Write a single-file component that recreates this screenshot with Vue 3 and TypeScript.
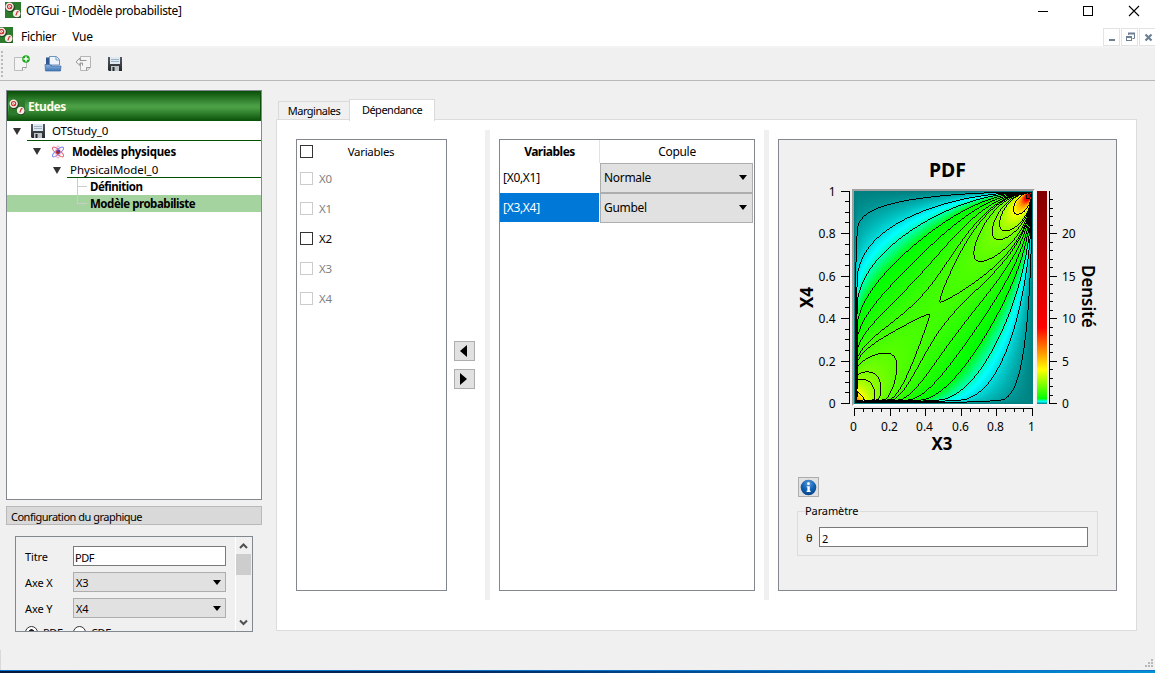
<script setup lang="ts">
import { onMounted, ref } from 'vue'

interface Tick { pos: number; label?: string }
interface VariableRow { name: string; enabled: boolean }
interface CopulaRow { pair: string; copula: string; selected: boolean }

const variables: VariableRow[] = [
  { name: 'X0', enabled: false },
  { name: 'X1', enabled: false },
  { name: 'X2', enabled: true },
  { name: 'X3', enabled: false },
  { name: 'X4', enabled: false },
]
const copulas: CopulaRow[] = [
  { pair: '[X0,X1]', copula: 'Normale', selected: false },
  { pair: '[X3,X4]', copula: 'Gumbel', selected: true },
]

const unitTicks = (origin: number, span: number): Tick[] =>
  Array.from({ length: 21 }, (_, i) => ({
    pos: Math.round(origin + (span * i) / 20) + 0.5,
    label: i % 4 === 0 ? String(i / 20) : undefined,
  }))
const xTicks = unitTicks(76, 178)
const yTicks = unitTicks(264, -212.5)
const zTicks: Tick[] = Array.from({ length: 25 }, (_, i) => ({
  pos: Math.round(264 - i * 8.5) + 0.5,
  label: i % 5 === 0 ? String(i) : undefined,
}))

const W = 179
const H = 213
const CELLS = 64
const levels = [0.063, 0.22, 0.38, 0.6, 0.83, 1.1, 1.37, 1.508, 1.77, 2.23, 2.58, 3.99, 10.9]
const stops: [number, number, number, number][] = [
  [0, 0, 128, 128],
  [0.3, 0, 255, 255],
  [0.62, 0, 255, 0],
  [4, 255, 255, 0],
  [9, 255, 0, 0],
  [25, 128, 0, 0],
]

/* Gumbel copula density, theta = 2 */
function density(u: number, v: number): number {
  if (u <= 0 || v <= 0 || u >= 1 || v >= 1) return 0
  const x = -Math.log(u)
  const y = -Math.log(v)
  const r = Math.sqrt(x * x + y * y)
  return (Math.exp(-r) / (u * v)) * x * y * Math.pow(r, -3) * (r + 1)
}

/* Density sampled on a regular grid and interpolated bilinearly */
const grid = Array.from({ length: CELLS + 1 }, (_, a) =>
  Array.from({ length: CELLS + 1 }, (_, b) => density(a / CELLS, b / CELLS)))

function sample(i: number, j: number): number {
  const clamp = (t: number) => Math.min(1, Math.max(0, t)) * CELLS
  const x = clamp(i / (W - 1))
  const y = clamp(1 - j / (H - 1))
  const a = Math.min(CELLS - 1, Math.floor(x))
  const b = Math.min(CELLS - 1, Math.floor(y))
  const s = x - a
  const t = y - b
  return (1 - s) * ((1 - t) * grid[a][b] + t * grid[a][b + 1]) + s * ((1 - t) * grid[a + 1][b] + t * grid[a + 1][b + 1])
}

function colour(z: number): number[] {
  for (let i = 1; i < stops.length; i++) {
    const a = stops[i - 1]
    const b = stops[i]
    if (z <= b[0]) {
      const t = (z - a[0]) / (b[0] - a[0])
      return [1, 2, 3].map(k => Math.round(a[k] + t * (b[k] - a[k])))
    }
  }
  return [128, 0, 0]
}

const plot = ref<HTMLCanvasElement | null>(null)
onMounted(() => {
  const ctx = plot.value?.getContext('2d')
  if (!ctx) return
  const img = ctx.createImageData(W, H)
  for (let j = 0; j < H; j++) {
    for (let i = 0; i < W; i++) {
      const c = sample(i, j)
      const near = [sample(i + 1, j), sample(i - 1, j), sample(i, j + 1), sample(i, j - 1)]
      const onLine = levels.some(l => c >= l && near.some(n => n < l))
      const rgb = onLine ? [0, 0, 0] : colour(c)
      img.data.set([rgb[0], rgb[1], rgb[2], 255], (j * W + i) * 4)
    }
  }
  ctx.putImageData(img, 0, 0)
})
</script>

<template>
  <div class="window">
    <svg class="defs" width="0" height="0">
      <defs>
        <linearGradient id="disk" x1="0" y1="0" x2="0" y2="1"><stop offset="0" stop-color="#555b62" /><stop offset="1" stop-color="#25282c" /></linearGradient>
        <linearGradient id="tray" x1="0" y1="0" x2="0" y2="1"><stop offset="0" stop-color="#8fb6e0" /><stop offset="1" stop-color="#3f74b5" /></linearGradient>
        <radialGradient id="ball" cx=".5" cy=".25" r=".8"><stop offset="0" stop-color="#5d9ad8" /><stop offset=".5" stop-color="#1262b3" /><stop offset="1" stop-color="#063f85" /></radialGradient>
        <symbol id="logo" viewBox="0 0 16 16">
          <rect width="16" height="16" fill="#2c7a2c" />
          <circle cx="5.200" cy="5.400" r="4.700" fill="#24401c" /><circle cx="4.600" cy="4.700" r="4.200" fill="#f3e9e2" />
          <circle cx="4.600" cy="4.600" r="2.100" fill="none" stroke="#c8302c" stroke-width="1.100" /><path d="M4.500 4.500 6.300 6.800" stroke="#c8302c" />
          <circle cx="12" cy="12" r="4.200" fill="#24401c" /><circle cx="11.700" cy="11.500" r="3.800" fill="#f3efe6" />
          <path d="M10.800 13.500 12.400 9.500M12.100 9.700h1.500" stroke="#c8302c" stroke-width="1.100" />
        </symbol>
        <symbol id="floppy" viewBox="0 0 14 14">
          <path d="M0 0h14v14H1L0 13z" fill="url(#disk)" /><rect x="2" y="0" width="10" height="7" fill="#dfe9f1" />
          <path d="M3 2.500h8M3 4.500h8" stroke="#9fb3c4" /><rect x="3" y="9" width="8" height="5" fill="#bfc4c8" /><rect x="4.500" y="10" width="2" height="4" fill="#25282c" />
        </symbol>
      </defs>
    </svg>

    <header class="titlebar">
      <svg class="logo title-logo"><use href="#logo" /></svg>
      <span class="title-text">OTGui - [Modèle probabiliste]</span>
      <svg class="win-buttons" width="110" height="20" viewBox="0 0 110 20" fill="none" stroke="#000" shape-rendering="crispEdges">
        <path d="M0 10.500h10" /><rect x="45.500" y="5.500" width="9" height="9" />
        <path d="M91 5l10 10M101 5l-10 10" shape-rendering="auto" stroke-width="1.100" />
      </svg>
    </header>

    <nav class="menubar">
      <svg class="logo menu-logo"><use href="#logo" /></svg>
      <span class="menu-file">Fichier</span><span>Vue</span>
      <div class="mdi">
        <button><svg width="15" height="16"><path d="M5 11h6" stroke="#6d7f92" stroke-width="2" /></svg></button>
        <button><svg width="15" height="16" fill="none" stroke="#6d7f92"><path d="M6.500 6V4.500h6v5h-2" /><path d="M6 4.500h7" stroke-width="2" /><rect x="4.500" y="8.500" width="5" height="3" /><path d="M4 8h6" stroke-width="2" /></svg></button>
        <button><svg width="15" height="16"><path d="M5.500 5.500l6 6M11.500 5.500l-6 6" stroke="#6d7f92" stroke-width="2.200" /></svg></button>
      </div>
    </nav>

    <div class="toolbar">
      <span class="grip"></span>
      <svg class="tool" width="18" height="18" viewBox="0 0 18 18"><path d="M1.500 2.500h12v10l-4 3h-8z" fill="#f4f4f4" stroke="#bcbcbc" /><path d="M9.500 15.500v-3h4" fill="#fff" stroke="#999" /><circle cx="13" cy="4" r="3.800" fill="#18a818" /><path d="M13 1.500v5M10.500 4h5" stroke="#fff" stroke-width="1.500" /></svg>
      <svg class="tool" width="18" height="18" viewBox="0 0 18 18"><path d="M2 15V2.500h2.500l1-1H8V12z" fill="#30588e" /><path d="M5.500 10V1.500h7l3 3V10z" fill="#eef4fb" stroke="#6f95c4" /><path d="M12 2v3h3" fill="none" stroke="#7799bd" /><path d="M1 9.500h5l1 1.500h10l-.5 5h-15z" fill="url(#tray)" stroke="#3c6ba8" stroke-width=".7" /></svg>
      <svg class="tool" width="18" height="18" viewBox="0 0 18 18"><path d="M5.500 1.500h10v11l-3 3h-7z" fill="#f4f4f4" stroke="#b5b5b5" /><path d="M11.500 15.500v-3h4" fill="#ddd" stroke="#999" /><path d="M11.500 5.500H5V3L1 6.800 5 10.500V8h2.500v2.500" fill="#f5f5f5" stroke="#888" stroke-width=".9" /></svg>
      <svg class="save" width="14" height="14"><use href="#floppy" /></svg>
    </div>

    <main class="body">
      <aside class="side">
        <section class="tree">
          <div class="tree-head"><svg class="logo"><use href="#logo" /></svg><b>Etudes</b></div>
          <div class="node study">
            <i class="arrow"></i>
            <div class="underlined"><svg width="14" height="14"><use href="#floppy" /></svg><span class="study-name">OTStudy_0</span></div>
          </div>
          <div class="node models">
            <i class="arrow"></i>
            <svg width="14" height="14" viewBox="0 0 14 14" fill="none"><ellipse cx="7" cy="7" rx="6.900" ry="2.200" stroke="#e8606e" transform="rotate(40 7 7)" /><ellipse cx="7" cy="7" rx="6.900" ry="2.200" stroke="#7c83f0" transform="rotate(-40 7 7)" /><ellipse cx="7" cy="7" rx="6.200" ry="2" stroke="#e58aa8" stroke-width=".7" transform="rotate(90 7 7)" /><circle cx="7" cy="7" r="2" fill="#a0262e" /><circle cx="8" cy="6" r="1" fill="#3a3acb" /></svg>
            <b class="models-name">Modèles physiques</b>
          </div>
          <div class="node model"><i class="arrow"></i><div class="underlined"><span>PhysicalModel_0</span></div></div>
          <div class="node leaf"><i class="branch"></i><b>Définition</b></div>
          <div class="node leaf last"><i class="branch"></i><b>Modèle probabiliste</b></div>
        </section>
        <div class="dock-title">Configuration du graphique</div>
        <section class="config">
          <div class="form">
            <label>Titre</label><div class="input">PDF</div>
            <label>Axe X</label><div class="combo">X3<i class="drop"></i></div>
            <label>Axe Y</label><div class="combo">X4<i class="drop"></i></div>
            <span class="radio"><i class="dot on"></i>PDF</span><span class="radio"><i class="dot"></i>CDF</span>
          </div>
          <div class="scrollbar">
            <svg width="16" height="17"><path d="M4 11l3.500-3.500L11 11" fill="none" stroke="#505050" stroke-width="2" /></svg>
            <div class="thumb"></div>
            <svg width="16" height="17"><path d="M4 6.500L7.500 10 11 6.500" fill="none" stroke="#505050" stroke-width="2" /></svg>
          </div>
        </section>
      </aside>

      <section class="tabs">
        <div class="tabbar"><div class="tab">Marginales</div><div class="tab active">Dépendance</div></div>
        <div class="pane">
          <div class="varlist">
            <div class="var-head"><i class="check"></i><span>Variables</span></div>
            <div v-for="v in variables" :key="v.name" class="var-row" :class="{ off: !v.enabled }"><i class="check"></i>{{ v.name }}</div>
          </div>
          <div class="movers">
            <button><svg width="19" height="18"><path d="M12 3v12L5 9z" /></svg></button>
            <button><svg width="19" height="18"><path d="M5 3v12l7-6z" /></svg></button>
          </div>
          <div class="splitter"></div>
          <div class="table">
            <div class="table-head"><b>Variables</b><span>Copule</span></div>
            <div v-for="c in copulas" :key="c.pair" class="table-row" :class="{ selected: c.selected }">
              <span class="pair">{{ c.pair }}</span><div class="combo">{{ c.copula }}<i class="drop"></i></div>
            </div>
          </div>
          <div class="splitter second"></div>
          <div class="detail">
            <div class="figure">
              <svg class="axes" width="337" height="330" viewBox="0 0 337 330">
                <text class="heading" x="150" y="37" textLength="37" lengthAdjust="spacingAndGlyphs">PDF</text>
                <g class="lines">
                  <path d="M70.500 51v213M75 268.500h179M270.500 51v213" />
                  <path v-for="t in yTicks" :key="'y' + t.pos" :d="`M${t.label ? 62 : 66} ${t.pos - 1}H71`" />
                  <path v-for="t in xTicks" :key="'x' + t.pos" :d="`M${t.pos - 1} 268V${t.label ? 276 : 272}`" />
                  <path v-for="t in zTicks" :key="'z' + t.pos" :d="`M270 ${t.pos - 1}H${t.label ? 278 : 274}`" />
                </g>
                <template v-for="t in yTicks" :key="'yl' + t.pos"><text v-if="t.label" x="56.500" :y="t.pos + 3.500" text-anchor="end">{{ t.label }}</text></template>
                <template v-for="t in xTicks" :key="'xl' + t.pos"><text v-if="t.label" :x="t.pos - 2" y="291" text-anchor="middle">{{ t.label }}</text></template>
                <template v-for="t in zTicks" :key="'zl' + t.pos"><text v-if="t.label" x="283" :y="t.pos + 3.500">{{ t.label }}</text></template>
                <text class="axis" x="152.500" y="310" textLength="21" lengthAdjust="spacingAndGlyphs">X3</text>
                <text class="axis" transform="translate(34 168) rotate(-90)" textLength="21" lengthAdjust="spacingAndGlyphs">X4</text>
                <text class="axis density" transform="translate(303 125) rotate(90)" textLength="63" lengthAdjust="spacingAndGlyphs">Densité</text>
              </svg>
              <canvas ref="plot" class="canvas" width="179" height="213"></canvas>
              <div class="scale"></div>
            </div>
            <button class="info"><svg width="17" height="17" viewBox="0 0 17 17"><circle cx="8.500" cy="8.500" r="7.800" fill="url(#ball)" /><circle cx="8.500" cy="4.700" r="1.400" fill="#fff" /><path d="M6.800 7.200h3v4.600h.8v1.200H6.600v-1.200h.8V8.300h-.6z" fill="#fff" /></svg></button>
            <fieldset><legend>Paramètre</legend><label>θ</label><div class="input">2</div></fieldset>
          </div>
        </div>
      </section>
    </main>
    <footer class="status">
      <svg width="10" height="10" fill="#b8b8b8"><path d="M6 0h2v2H6zM3 3h2v2H3zM6 3h2v2H6zM0 6h2v2H0zM3 6h2v2H3zM6 6h2v2H6z" /></svg>
    </footer>
    <div class="desktop"></div>
  </div>
</template>

<style>
html, body { margin: 0; overflow: hidden; }
</style>

<style scoped>
* { box-sizing: border-box; }
.window { width: 1155px; height: 673px; display: flex; flex-direction: column; background: #f0f0f0; color: #000; font: 11px/14px "Noto Sans", "Open Sans", sans-serif; overflow: hidden; white-space: nowrap; }
.defs { position: absolute; }
svg { display: block; flex: none; }
button { padding: 0; margin: 0; }
.logo { width: 16px; height: 16px; }
.titlebar { height: 22px; flex: none; display: flex; align-items: center; background: #fff; padding-left: 5px; font-size: 12px; }
.title-logo { margin-top: -3px; }
.title-text { margin-left: 5px; margin-top: -1px; letter-spacing: -.32px; }
.win-buttons { margin-left: auto; margin-right: 7px; }
.menubar { height: 26px; flex: none; display: flex; align-items: center; background: #fff; border-bottom: 2px solid #f3f3f3; font-size: 12px; letter-spacing: -.3px; }
.menu-logo { margin-left: -3px; margin-top: 2px; }
.menu-file { margin: 0 16px 0 8px; }
.menubar > span { padding-top: 5px; }
.mdi { display: flex; gap: 1px; margin-left: auto; margin-right: -1px; padding-top: 5px; }
.mdi button { width: 17px; height: 18px; border: 1px solid #e3e3e3; background: #fff; }
.toolbar { height: 33px; flex: none; display: flex; align-items: center; border-bottom: 1px solid #b9b9b9; }
.grip { width: 2px; height: 27px; background: repeating-linear-gradient(#bbb 0 2px, transparent 2px 4px); margin: 0 10px 0 1px; }
.tool { margin-right: 13px; }
.save { margin-left: 2px; }
.body { display: flex; flex: 1; min-height: 0; }
.side { width: 256px; margin: 9px 14px 0 6px; flex: none; display: flex; flex-direction: column; }
.tree { height: 410px; flex: none; border: 1px solid #828790; background: #fff; font-size: 11.500px; }
.tree-head { height: 30px; display: flex; align-items: center; gap: 3px; padding: 1px 0 0 2px; color: #fffbe8; font-size: 12px; background: linear-gradient(#084e08, #4a9f45 48%, #4a9f45 56%, #085008); box-shadow: inset 1px 0 #0a500a, inset -1px 0 #0a500a; letter-spacing: -.45px; }
.node { display: flex; align-items: center; }
.arrow { width: 0; height: 0; flex: none; border: 4px solid transparent; border-top: 7px solid #333; border-bottom: 0; }
.study { height: 20px; padding-left: 6px; }
.study .underlined { margin-left: 6px; padding-left: 4px; border-bottom: 1px solid #005000; }
.underlined { flex: 1; align-self: stretch; display: flex; align-items: center; }
.study-name { margin-left: 7px; letter-spacing: -.1px; padding-top: 1px; }
.models { height: 21px; padding-left: 26px; }
.models svg { margin-left: 10px; }
.node b { letter-spacing: -.47px; }
.node .models-name { margin-left: 7px; letter-spacing: -.31px; }
.model { height: 16px; padding-left: 46px; }
.model .underlined { margin-left: 6px; padding-left: 3px; border-bottom: 1px solid #005000; letter-spacing: -.05px; }
.leaf { height: 17px; padding-left: 70px; }
.branch { width: 10px; align-self: stretch; margin-right: 3px; border-left: 1px solid #ccc; background: linear-gradient(#ccc, #ccc) 0 8px / 10px 1px no-repeat; }
.last { background: #a5d3a0; }
.last .branch { align-self: flex-start; height: 9px; }
.dock-title { height: 19px; margin-top: 6px; flex: none; border: 1px solid #b9b9b9; background: #d9d9d9; padding: 3px 0 0 4px; letter-spacing: -.5px; }
.config { width: 238px; height: 96px; flex: none; margin: 11px 0 0 9px; border: 1px solid #828790; display: flex; overflow: hidden; }
.form { width: 219px; display: grid; grid-template-columns: 48px 153px; grid-auto-rows: 20px; row-gap: 6px; align-content: start; padding: 9px 0 0 9px; letter-spacing: -.2px; }
.form > * { align-self: center; }
.form label { padding-top: 2px; letter-spacing: -.1px; }
.input { height: 20px; border: 1px solid #7a7a7a; background: #fff; padding: 4px 0 0 2px; }
.form .input { padding-left: 1px; letter-spacing: -.5px; }
.combo { height: 20px; border: 1px solid #adadad; background: #e1e1e1; display: flex; align-items: center; padding: 1px 4px 0 2px; }
.drop { margin-left: auto; border: 4.500px solid transparent; border-top: 5px solid #000; border-bottom: 0; width: 0; height: 0; }
.radio { display: flex; align-items: center; gap: 5px; height: 17px; letter-spacing: -.4px; }
.form .radio { align-self: start; }
.dot { width: 13px; height: 13px; border: 1px solid #333; border-radius: 50%; background: #fff; flex: none; }
.dot.on { background: radial-gradient(circle, #222 0 3px, #fff 3.500px); }
.scrollbar { width: 17px; border-left: 1px solid #fff; }
.thumb { height: 21px; width: 15px; background: #cdcdcd; margin-bottom: 39px; }
.tabs { width: 861px; margin-top: 18px; height: 532px; }
.tabbar { display: flex; height: 21px; padding-left: 2px; align-items: flex-end; position: relative; z-index: 1; letter-spacing: -.5px; }
.tab { width: 72px; height: 19px; border: 1px solid #dadada; border-bottom: 0; text-align: center; padding-top: 2px; }
.tab.active { width: 86px; height: 22px; margin: 0 0 -1px -1px; background: #fff; padding-top: 3px; }
.pane { height: 512px; margin-top: -1px; border: 1px solid #dcdcdc; background: #fff; display: flex; padding: 10px 0 0 19px; }
.varlist { width: 151px; height: 452px; margin-top: 9px; border: 1px solid #828790; font-size: 11.500px; letter-spacing: -.3px; }
.var-head { height: 24px; display: flex; align-items: center; padding: 0 0 1px 3px; }
.var-head span { width: 116px; text-align: center; }
.check { width: 13px; height: 13px; border: 1px solid #333; background: #fff; flex: none; }
.var-row { height: 30px; display: flex; align-items: center; gap: 6px; padding: 0 0 1px 3px; }
.off { color: #7f7f7f; }
.off .check { border-color: #ccc; }
.movers { width: 21px; margin: 211px 10px 0 7px; display: flex; flex-direction: column; gap: 8px; }
.movers button, .info { width: 21px; height: 20px; border: 1px solid #adadad; background: #e1e1e1; display: block; }
.splitter { width: 5px; height: 470px; background: #f0f0f0; }
.table { width: 256px; height: 452px; margin: 9px 9px 0; border: 1px solid #828790; font-size: 12px; letter-spacing: -.3px; }
.table-head { display: flex; height: 23px; line-height: 24px; text-align: center; letter-spacing: -.5px; }
.table-head b { width: 100px; border-right: 1px solid #e2e2e2; }
.table-head span { flex: 1; letter-spacing: -.3px; }
.table-row { display: flex; height: 30px; }
.pair { width: 99px; margin-right: 1px; height: 29px; padding: 8px 0 0 3px; }
.table-row .combo { width: 153px; height: 30px; padding: 0 5px 1px 3px; }
.selected .pair { background: #0078d7; color: #fff; }
.detail { width: 339px; height: 452px; margin: 9px 0 0 9px; border: 1px solid #828790; background: #f0f0f0; }
.figure { height: 337px; position: relative; }
.axes { font: 12px "Noto Sans", sans-serif; }
.lines { fill: none; stroke: #000; shape-rendering: crispEdges; }
.heading { font-size: 19.500px; font-weight: 700; }
.axis { font-size: 17px; font-weight: 700; }
.density { font-weight: 600; }
.canvas { position: absolute; left: 73px; top: 49px; border: 2px solid; border-color: #a0a0a0 #fff #fff #a0a0a0; box-sizing: content-box; }
.scale { position: absolute; left: 258px; top: 51px; width: 10px; height: 213px; background: linear-gradient(to top, #008080 0, #00ffff 1.200%, #00ff00 2.500%, #ffff00 16%, #ff0000 36%, #800000 100%); }
.info { margin: 0 0 0 19px; }
.info svg { margin-left: 1px; }
fieldset { margin: 7px 0 0 18px; width: 301px; height: 52px; padding: 9px 9px 0 8px; border: 1px solid #dcdcdc; display: flex; }
legend { padding: 0 2px 0 0; margin-left: -1px; line-height: 14px; letter-spacing: -.1px; }
fieldset label { width: 13px; padding-top: 4px; }
fieldset .input { flex: 1; }
.status { height: 20px; flex: none; display: flex; justify-content: flex-end; align-items: flex-end; padding: 0 0 1px; border-left: 1px solid #d9d9d9; }
.desktop { height: 3px; flex: none; border-top: 1px solid #0b73c9; background: linear-gradient(90deg, #03183a, #03275c 40%, #0068b8 75%, #0092d4); }
</style>
